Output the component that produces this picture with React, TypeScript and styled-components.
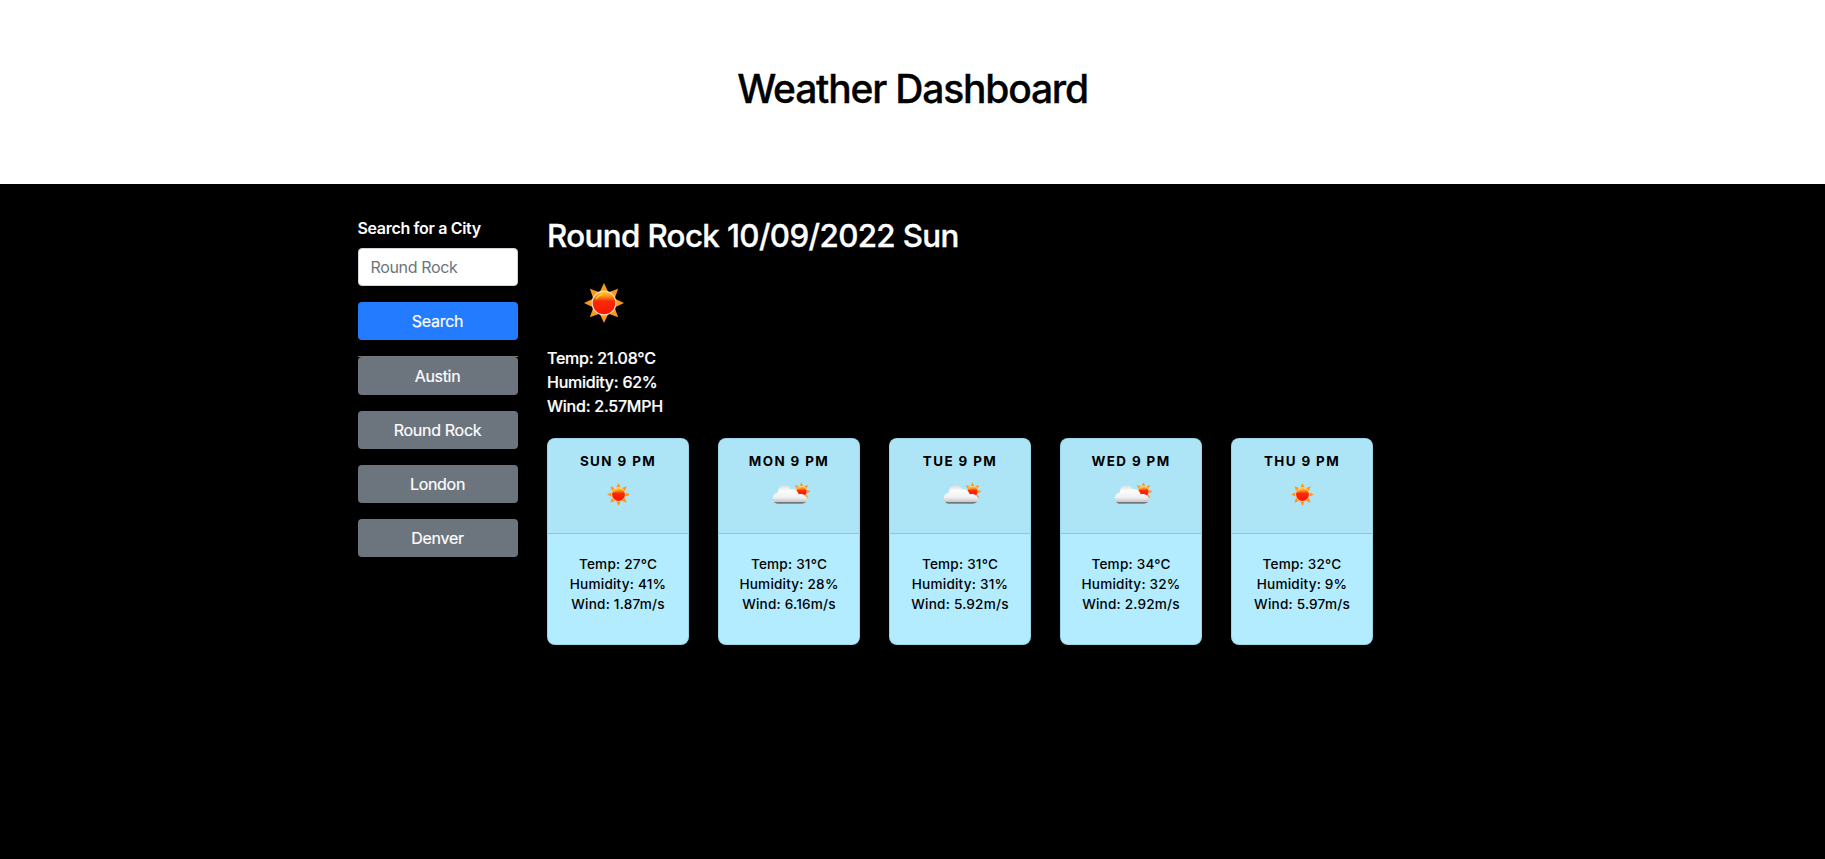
import React from 'react';
import styled, { createGlobalStyle } from 'styled-components';

const GlobalStyle = createGlobalStyle`
  *, *::before, *::after { box-sizing: border-box; }
  html, body { margin: 0; background: #000; overflow: hidden; }
  body {
    font-family: Inter, "Liberation Sans", sans-serif;
    font-size: 16px;
    line-height: 1.5;
    color: #fff;
  }
`;

const Page = styled.div`
  min-height: 859px;
  background: #000;
`;

const Banner = styled.header`
  height: 184px;
  padding: 64px 32px;
  background: #fff;
  color: #000;
  text-align: center;
`;

const BannerTitle = styled.h1`
  margin: 0 0 8px;
  padding-top: 1px;
  font-size: 39px;
  font-weight: 500;
  line-height: 48px;
  letter-spacing: -1.2px;
  -webkit-text-stroke: 0.35px currentColor;
`;

const Container = styled.div`
  display: flex;
  width: 1140px;
  margin: 0 auto;
  padding-top: 32px;
`;

const Sidebar = styled.aside`
  display: flex;
  flex-direction: column;
  width: 190px;
  padding: 0 15px;
`;

const Label = styled.label`
  margin-bottom: 8px;
  font-weight: 600;
  letter-spacing: -0.33px;
`;

const CityInput = styled.input`
  width: 100%;
  height: 38px;
  padding: 6px 12px;
  border: 1px solid #ced4da;
  border-radius: 4px;
  background: #fff;
  font: inherit;
  letter-spacing: -0.35px;
  &::placeholder { color: #6c757d; opacity: 1; }
`;

const Button = styled.button<{ $tone: 'primary' | 'secondary' }>`
  width: 100%;
  height: 38px;
  padding: 0;
  border: 0;
  border-radius: 4px;
  background: ${(p) => (p.$tone === 'primary' ? '#237bff' : '#6c757d')};
  color: #fff;
  font: inherit;
  letter-spacing: -0.3px;
  -webkit-text-stroke: 0.2px currentColor;
`;

const SearchButton = styled(Button)`
  margin: 16px 0;
`;

const History = styled.div`
  display: flex;
  flex-direction: column;
  gap: 16px;
  border-top: 1px solid #777;
`;

const Main = styled.main`
  width: 855px;
  padding: 0 15px 0 14.5px;
`;

const CityTitle = styled.h2`
  margin: 0 0 8px;
  padding-top: 1px;
  font-size: 31.3px;
  font-weight: 500;
  line-height: 38.4px;
  letter-spacing: -0.62px;
  -webkit-text-stroke: 0.35px currentColor;
`;

const CurrentIcon = styled.div`
  display: flex;
  align-items: center;
  justify-content: center;
  width: 114px;
  height: 80px;
`;

const CurrentStats = styled.div`
  margin-top: 3px;
  font-weight: 500;
  letter-spacing: -0.24px;
  -webkit-text-stroke: 0.2px currentColor;
`;

const Forecast = styled.section`
  display: flex;
  gap: 29px;
  margin-top: 19.6px;
`;

const Card = styled.article`
  flex: 0 0 142px;
  height: 207px;
  overflow: hidden;
  border: 1px solid rgba(60, 130, 150, 0.22);
  border-radius: 8px;
  background: #b3ecff;
  color: #000;
  text-align: center;
`;

const CardHead = styled.div`
  display: flex;
  flex-direction: column;
  align-items: center;
  height: 95px;
  padding-top: 12px;
  border-bottom: 1px solid #93c2d1;
  background: #aee5f6;
`;

const Day = styled.div`
  font-size: 13.4px;
  font-weight: 700;
  line-height: 20px;
  letter-spacing: 1.4px;
`;

const CardIcon = styled.div<{ $sunny: boolean }>`
  display: flex;
  justify-content: center;
  margin-top: 11px;
  padding: ${(p) => (p.$sunny ? '1px 0 0' : '0 0 0 5px')};
`;

const CardBody = styled.div`
  padding-top: 20px;
  font-size: 13.6px;
  font-weight: 500;
  line-height: 20px;
  letter-spacing: 0.2px;
`;

const rays = [0, 45, 90, 135, 180, 225, 270, 315];

const SunDefs = () => (
  <defs>
    <linearGradient id="disc" x1="0" y1="0" x2="0" y2="1">
      <stop offset="0" stopColor="#ffc94d" />
      <stop offset="0.22" stopColor="#fb8b1e" />
      <stop offset="0.42" stopColor="#f92a04" />
      <stop offset="1" stopColor="#fa1600" />
    </linearGradient>
    <linearGradient id="cloud" x1="0" y1="0" x2="0" y2="1">
      <stop offset="0" stopColor="#dcdcdf" />
      <stop offset="0.3" stopColor="#fdfdfd" />
      <stop offset="0.65" stopColor="#f1f1f3" />
      <stop offset="0.88" stopColor="#c9cacd" />
      <stop offset="0.93" stopColor="#77797c" />
      <stop offset="1" stopColor="#77797c" />
    </linearGradient>
  </defs>
);

const SunShape = () => (
  <>
    {rays.map((a) => (
      <path key={a} d="M-4 -11.5 L0 -20 L4 -11.5Z" fill="#f8981d" transform={`rotate(${a})`} />
    ))}
    <circle r="12.5" fill="#ffe2c4" />
    <circle r="11.3" fill="url(#disc)" />
    <path d="M-7.8 -4 A9 9 0 0 1 -1 -8.8" fill="none" stroke="#ffd800" strokeWidth="1.6" opacity="0.8" />
  </>
);

const Sun = ({ size }: { size: number }) => (
  <svg width={size} height={size} viewBox="-20 -20 40 40">
    <SunDefs />
    <SunShape />
  </svg>
);

const CloudSun = () => (
  <svg width="39" height="23" viewBox="0 0 39 23">
    <SunDefs />
    <g transform="translate(29.5 9.5) scale(0.46)">
      <SunShape />
    </g>
    <path
      d="M6.3 21.7 C2.8 21.7 0.8 19.1 0.8 16.2 C0.8 13.2 3 11 5.7 10.7 C6 6.4 8.8 3.3 12.7 3.3 C15.6 3.3 17.7 4.9 18.7 7.2 C21.9 6.4 25.6 8.3 26.7 12.2 C31 11.2 34.8 13.6 34.8 17 C34.8 19.8 32.8 21.7 30 21.7Z"
      fill="url(#cloud)"
    />
  </svg>
);

const cities = ['Austin', 'Round Rock', 'London', 'Denver'];

const forecast = [
  { day: 'SUN', sunny: true, temp: 27, humidity: 41, wind: 1.87 },
  { day: 'MON', sunny: false, temp: 31, humidity: 28, wind: 6.16 },
  { day: 'TUE', sunny: false, temp: 31, humidity: 31, wind: 5.92 },
  { day: 'WED', sunny: false, temp: 34, humidity: 32, wind: 2.92 },
  { day: 'THU', sunny: true, temp: 32, humidity: 9, wind: 5.97 },
];

export default function App() {
  return (
    <Page>
      <GlobalStyle />
      <Banner>
        <BannerTitle>Weather Dashboard</BannerTitle>
      </Banner>
      <Container>
        <Sidebar>
          <Label htmlFor="city">Search for a City</Label>
          <CityInput id="city" placeholder="Round Rock" />
          <SearchButton $tone="primary">Search</SearchButton>
          <History>
            {cities.map((city) => (
              <Button key={city} $tone="secondary">{city}</Button>
            ))}
          </History>
        </Sidebar>
        <Main>
          <CityTitle>Round Rock 10/09/2022 Sun</CityTitle>
          <CurrentIcon>
            <Sun size={40} />
          </CurrentIcon>
          <CurrentStats>
            <div>Temp: 21.08°C</div>
            <div>Humidity: 62%</div>
            <div>Wind: 2.57MPH</div>
          </CurrentStats>
          <Forecast>
            {forecast.map((f) => (
              <Card key={f.day}>
                <CardHead>
                  <Day>{f.day} 9 PM</Day>
                  <CardIcon $sunny={f.sunny}>{f.sunny ? <Sun size={23} /> : <CloudSun />}</CardIcon>
                </CardHead>
                <CardBody>
                  <div>Temp: {f.temp}°C</div>
                  <div>Humidity: {f.humidity}%</div>
                  <div>Wind: {f.wind}m/s</div>
                </CardBody>
              </Card>
            ))}
          </Forecast>
        </Main>
      </Container>
    </Page>
  );
}
